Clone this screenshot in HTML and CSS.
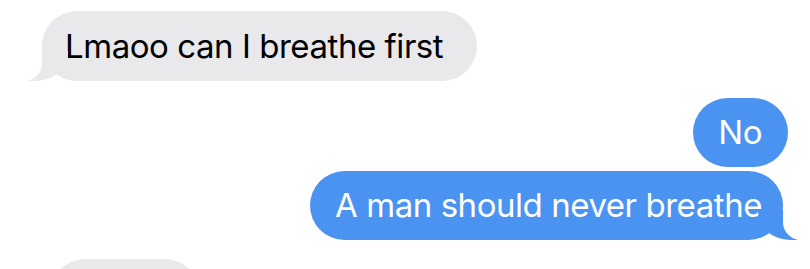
FILE: index.html
```html
<!DOCTYPE html>
<html lang="en">
<head>
<meta charset="utf-8">
<link rel="stylesheet" href="styles.css">
</head>
<body>
<div class="thread">
  <div class="bubble them tail">Lmaoo can I breathe first</div>
  <div class="bubble me no">No</div>
  <div class="bubble me tail last-me">A man should never breathe</div>
  <div class="bubble them next"></div>
</div>
</body>
</html>
```
FILE: styles.css
```css
html, body {
  margin: 0;
  padding: 0;
  background: #ffffff;
  overflow: hidden;
}
body {
  width: 810px;
  height: 269px;
}
.thread {
  display: flex;
  flex-direction: column;
  box-sizing: border-box;
  height: 269px;
  overflow: hidden;
  padding-top: 11px;
  font-family: "Inter", "Liberation Sans", sans-serif;
}
.bubble {
  position: relative;
  flex: none;
  box-sizing: border-box;
  height: 70px;
  border-radius: 35px;
  display: flex;
  align-items: center;
  font-size: 33px;
  letter-spacing: -0.45px;
  line-height: 1;
  white-space: nowrap;
}
.them {
  align-self: flex-start;
  background: #e9e9eb;
  color: #000;
  margin-left: 42px;
  padding: 0 34px 0 23px;
}
.me {
  align-self: flex-end;
  background: #4b93f1;
  color: #fff;
  padding: 0 21px 0 25px;
}
.no {
  margin-top: 17px;
  margin-right: 22px;
  height: 69px;
  padding: 0 26px 0 25px;
}
.last-me {
  margin-top: 4px;
  margin-right: 27px;
  height: 69px;
}
.next {
  margin-top: 19px;
  margin-left: 50px;
  width: 150px;
}
.tail::before,
.tail::after {
  content: "";
  position: absolute;
  bottom: 0;
  height: 30px;
}
.them.tail::before {
  left: -14px;
  width: 40px;
  background: #e9e9eb;
  border-bottom-right-radius: 32px 28px;
}
.them.tail::after {
  left: -50px;
  width: 50px;
  background: #ffffff;
  border-bottom-right-radius: 18px;
}
.me.tail::before {
  right: -15px;
  width: 40px;
  background: #4b93f1;
  border-bottom-left-radius: 32px 28px;
}
.me.tail::after {
  right: -50px;
  width: 50px;
  background: #ffffff;
  border-bottom-left-radius: 18px;
}
```
